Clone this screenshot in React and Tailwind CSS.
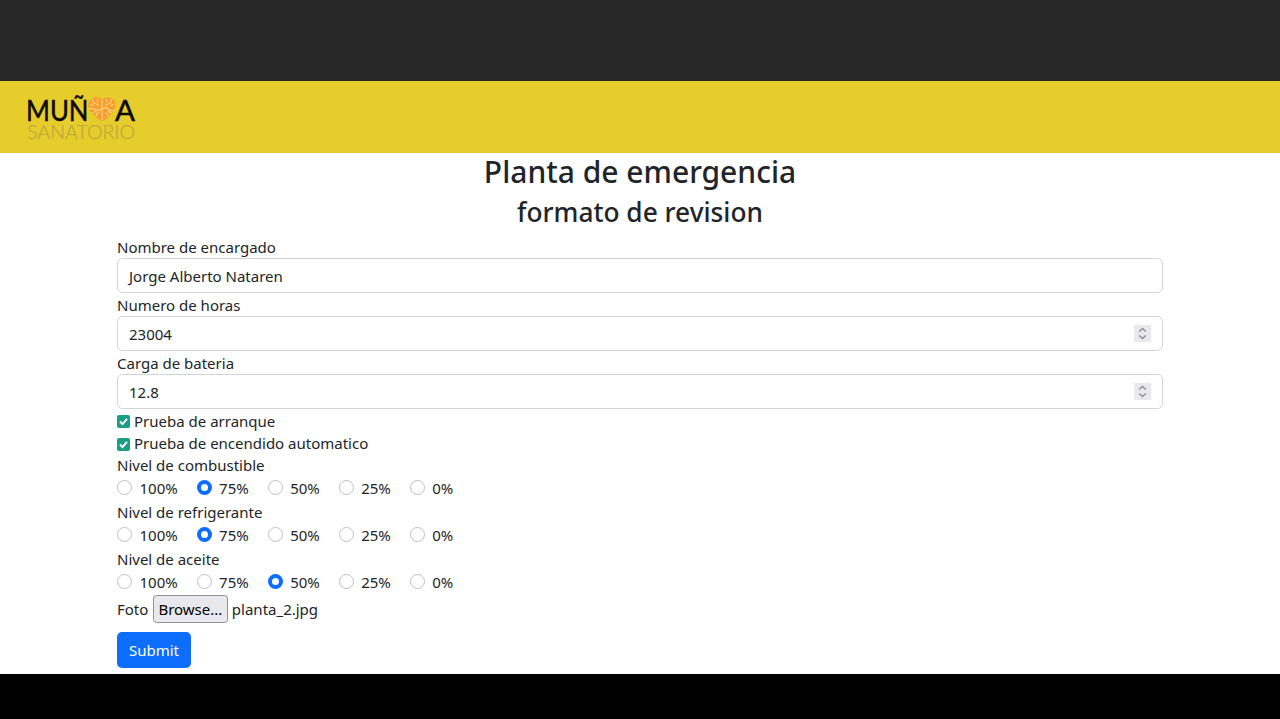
import React from "react";

function Logo() {
  return (
    <svg width="112" height="50" viewBox="0 0 112 50" role="img" aria-label="Muñoa Sanatorio">
      <g fontFamily="Lato, sans-serif">
        <g fontSize="29.500" fill="#0b0a04" stroke="#0b0a04" strokeWidth=".5">
          <text x="-1" y="29" textLength="62.500" lengthAdjust="spacingAndGlyphs">MUÑ</text>
          <text x="88" y="29" textLength="20" lengthAdjust="spacingAndGlyphs">A</text>
        </g>
        <text x="0" y="47" fontSize="20" fontWeight="300" fill="#bfa640" stroke="#bfa640" strokeWidth=".25" textLength="108" lengthAdjust="spacingAndGlyphs">SANATORIO</text>
      </g>
      <g transform="translate(0 1)">
        <path d="M75 6.500C72 3.500 67 3.500 65 6C62 7 61 10 61.500 13C61.500 17 64 20 67 22C69 25 72 27 75 28C78 27 81 25 83 22C86 20 88.500 17 88.500 13C89 10 88 7 85 6C83 3.500 78 3.500 75 6.500Z" fill="#f99d33" />
        <path d="M75 7v20M62 16q3-1.500 6 .5t7-.5 7 .5 6-.5M66 6.500q-1 3 2 4t4 2M63.500 11l3 2M71 6l-1 3M84 6.500q1 3-2 4t-4 2M86.500 11l-3 2M79 6l1 3M65 19.500q3 1 4-3M69 23.500q0-3 3-4M85 19.500q-3 1-4-3M81 23.500q0-3-3-4" fill="none" stroke="#f8d777" strokeWidth="1.100" />
      </g>
    </svg>
  );
}

function Stepper() {
  return (
    <span className="flex h-[17px] w-[17px] items-center justify-center bg-[#e9e9ed]">
      <svg width="17" height="17" viewBox="0 0 17 17" fill="none" stroke="#8f8f9d" strokeWidth="1.6">
        <path d="M5.200 6.500L8.500 3.500l3.300 3M5.200 10.500l3.300 3 3.300-3" />
      </svg>
    </span>
  );
}

function Field({ label, value, numeric }) {
  return (
    <div>
      <div className="h-[22.5px] pt-[0.500px]">{label}</div>
      <div className="flex h-[35.6px] items-center justify-between rounded-[5.6px] border border-[#ced4da] px-[11px]">
        <span className="pt-[1px]">{value}</span>
        {numeric && <Stepper />}
      </div>
    </div>
  );
}

function Check({ label }) {
  return (
    <div className="flex h-[22.5px] items-center">
      <svg className="mt-[1.500px] mr-[4px]" width="13" height="13" viewBox="0 0 13 13">
        <rect width="13" height="13" rx="2" fill="#1a9f85" />
        <path d="M3 6.500l2.500 2.600L10 3.800" fill="none" stroke="#fff" strokeWidth="1.900" />
      </svg>
      {label}
    </div>
  );
}

const LEVELS = ["100%", "75%", "50%", "25%", "0%"];

function Level({ label, selected }) {
  return (
    <div>
      <div className="h-[22.5px]">{label}</div>
      <div className="mb-[1.9px] flex h-[22.5px] gap-[18.9px]">
        {LEVELS.map((level) => (
          <div key={level} className="flex">
            <span
              className={
                level === selected
                  ? "mt-[3.500px] mr-[7.5px] h-[15px] w-[15px] rounded-full border-[4.7px] border-[#0d6efd] bg-white"
                  : "mt-[3.500px] mr-[7.5px] h-[15px] w-[15px] rounded-full border border-[#bfbfbf] bg-white"
              }
            />
            {level}
          </div>
        ))}
      </div>
    </div>
  );
}

export default function App() {
  return (
    <div className="flex h-[719px] flex-col overflow-hidden bg-black font-['Noto_Sans',sans-serif] text-[15px] leading-[22.5px] text-[#212529]">
      <div className="h-[80.600px] shrink-0 bg-[#282828]" />
      <header className="h-[72px] shrink-0 bg-[#e7cd2b] pt-[11.400px] pl-[27px]">
        <Logo />
      </header>
      <main className="h-[521.400px] shrink-0 bg-white px-[117px]">
        <h1 className="mb-[6px] pt-[1.500px] text-center text-[30px] leading-[36px] font-medium">Planta de emergencia</h1>
        <h2 className="mb-[6.700px] pt-[0.800px] text-center text-[26.25px] leading-[31.5px] font-medium">formato de revision</h2>
        <Field label="Nombre de encargado" value="Jorge Alberto Nataren" />
        <Field label="Numero de horas" value="23004" numeric />
        <Field label="Carga de bateria" value="12.8" numeric />
        <div className="-mb-[0.400px] pt-[0.400px]">
          <Check label="Prueba de arranque" />
          <Check label="Prueba de encendido automatico" />
        </div>
        <Level label="Nivel de combustible" selected="75%" />
        <Level label="Nivel de refrigerante" selected="75%" />
        <Level label="Nivel de aceite" selected="50%" />
        <div className="flex h-[28px] items-center">
          <span>Foto</span>
          <button className="mr-[4px] ml-[4.500px] h-[28px] w-[75px] rounded-[3.500px] border border-[#8f8f9d] bg-[#e9e9ed] text-black">Browse...</button>
          <span>planta_2.jpg</span>
        </div>
        <button className="mt-[9px] block h-[35.600px] w-[74px] rounded-[5px] bg-[#0d6efd] pt-[1px] text-white">Submit</button>
      </main>
    </div>
  );
}
